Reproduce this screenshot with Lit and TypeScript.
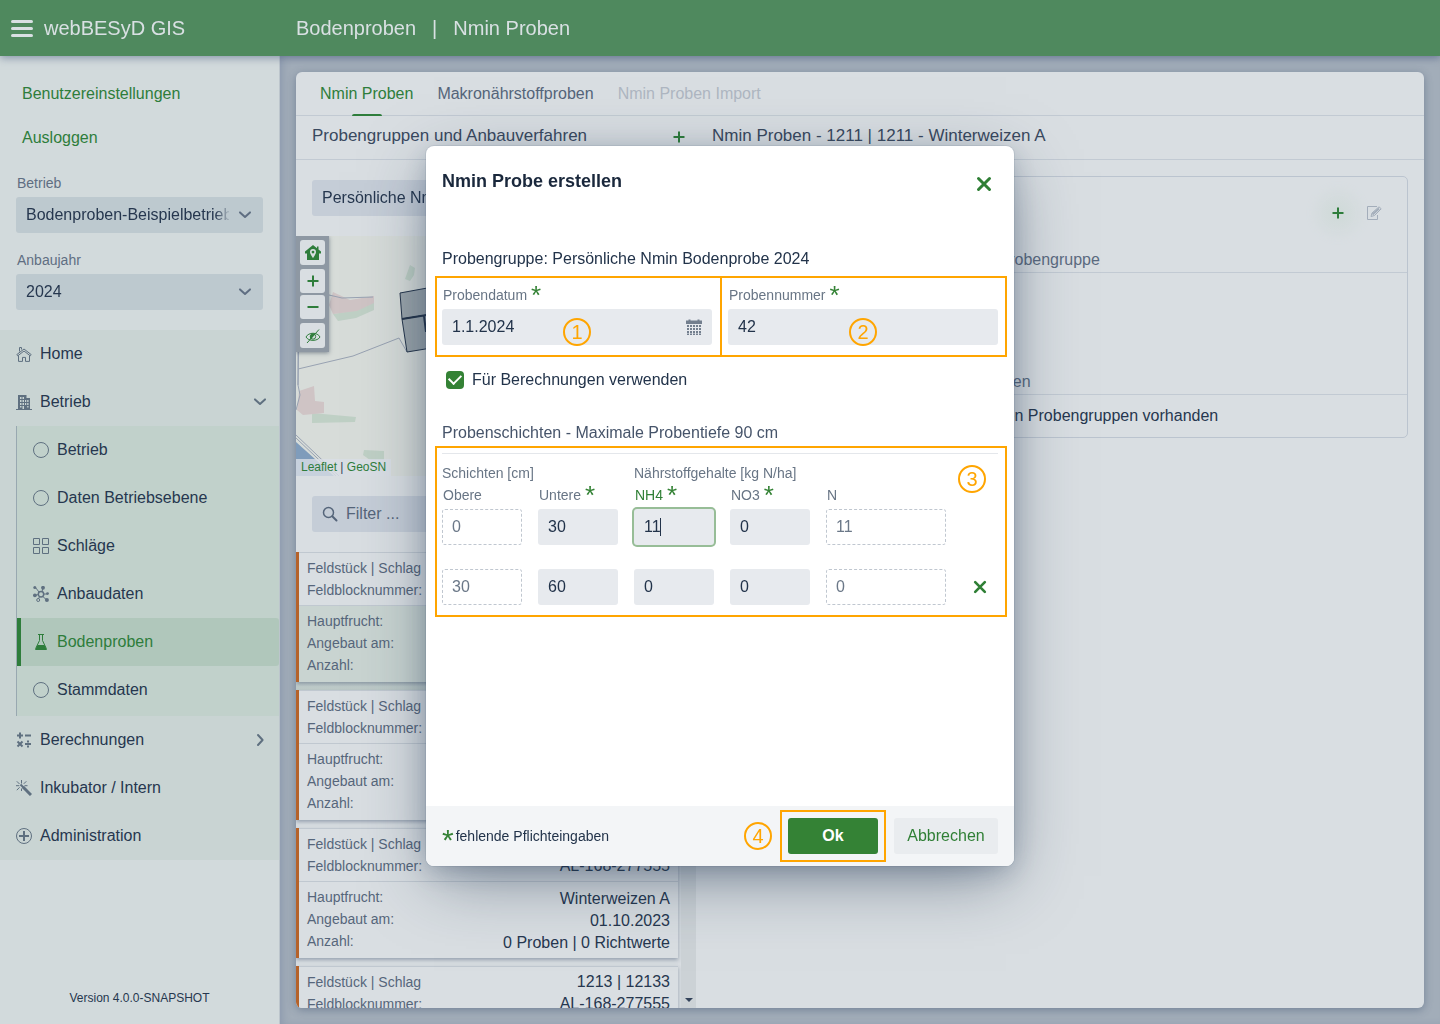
import { LitElement, html, css, svg, nothing } from "lit";
import { customElement, property } from "lit/decorators.js";
import { classMap } from "lit/directives/class-map.js";

const icons: Record<string, unknown> = {
  home: svg`<path d="M.8 8.600 8 3l7.200 5.600-1 1.200L8 5 1.800 9.800zM3.500 5.500V1.500h2v2" /><path d="M2.500 9.500v5.900h4v-4h3v4h4V9.500" />`,
  building: svg`<path class="fill" fill-rule="evenodd" d="M2 1h8.500v3H14v11h2v1H0v-1h2zM4 3v2h1.500V3zm2.500 0v2H8V3zM4 6v2h1.500V6zm2.500 0v2H8V6zM9 6v2h1.200V6zm2.200 0v2h1.300V6zM4 9v2h1.500V9zm2.500 0v2H8V9zM9 9v2h1.200V9zm2.200 0v2h1.300V9zM4 12v1.500h1.500V12zm2.500 0v3H8v-3zm4.700 0v1.500h1.300V12z" />`,
  circle: svg`<circle cx="8" cy="8" r="7.500" />`,
  grid: svg`<path d="M.5.5h6v6h-6zM9.500.5h6v6h-6zM.5 9.500h6v6h-6zM9.500 9.500h6v6h-6z" />`,
  cluster: svg`<circle cx="8" cy="8.200" r="2.700" stroke-width="1.500" /><path d="M2.500 1.500 6 6M10 2 9 5.500M5.300 8.600 2 9.200M10.700 8h3.500M9.800 10.500l3.700 3.300M6.500 10.800l-1 2" /><g class="fill"><circle cx="1.800" cy="1.500" r="1.500" /><circle cx="10" cy="1.800" r="1.900" /><circle cx="1.900" cy="9.300" r="1.900" /><circle cx="14.500" cy="7.600" r="1.400" /><circle cx="13.900" cy="14" r="2" /></g><circle cx="5.200" cy="14" r="1.500" />`,
  flask: svg`<path d="M5 .5h6M6.500.5v6L2.700 14.500h10.600L9.500 6.500v-6" /><path class="fill" d="M4.500 11h7L14 16H2z" />`,
  calc: svg`<path stroke-width="2" d="M1 3.500h6M4 .5v6M9 3.500h6M1.500 9.500l5 5M6.500 9.500l-5 5M9 12h6" /><path class="fill" d="M11 8.500h2v2h-2zM11 13.500h2v2h-2z" />`,
  magic: svg`<path stroke-width="3" d="m7 7 8 8" /><path d="M5.500 0v3.500M.8 1.300l2.700 2.700M10.300 1.300 7.800 3.800M0 5.700h3.300M8.500 5.700h3M3.600 7.300.8 10.200M5.500 8.500V11" /><path d="m4.500 4.500 3 3" stroke-width="2" />`,
  plusCircle: svg`<circle cx="8" cy="8" r="7.500" /><path stroke-width="2" d="M8 3v10M3 8h10" />`,
  down: svg`<path stroke-width="2" stroke-linecap="round" stroke-linejoin="round" d="M3 5.400 8 10l5-4.600" />`,
  right: svg`<path stroke-width="2" stroke-linecap="round" stroke-linejoin="round" d="M6 3l4.600 5L6 13" />`,
  plus: svg`<path stroke-width="2" d="M8 2.500v11M2.500 8h11" />`,
  minus: svg`<path stroke-width="2" d="M2.500 8h11" />`,
  cross: svg`<path stroke-width="3" stroke-linecap="round" d="m2.500 2.500 11 11M13.500 2.500l-11 11" />`,
  search: svg`<circle cx="6.500" cy="6.500" r="5" stroke-width="1.500" /><path stroke-width="2" stroke-linecap="round" d="m10.500 10.500 4 4" />`,
  edit: svg`<path d="M11 1.500H1.500v13h10V10" /><path d="m5 11.500 1-3.500L13 1.800l2.200 2L8.500 10.500z" /><path stroke-width="2" d="m6.500 9.500 6.500-6" />`,
  pinHome: svg`<path class="fill" fill-rule="evenodd" d="M8 0 0 6.500v2h2V15h12V8.500h2v-2l-2.500-2v-3H12v1.700zM8 4a3 3 0 0 1 3 3c0 2-3 6-3 6S5 9 5 7a3 3 0 0 1 3-3zm0 1.700a1.400 1.400 0 1 0 0 2.800 1.400 1.400 0 0 0 0-2.800z" />`,
  eyeOff: svg`<path d="M1 9c2.500-5 11.500-5 14 0-2.500 4.500-11.500 4.500-14 0zM2 15 14 1.500" /><circle cx="8" cy="8.500" r="2.700" /><path class="fill" d="M5.500 11.500C4 7.500 6 5.500 10 6z" />`,
  calendar: svg`<path class="fill" d="M0 1.500h2.500V.5h2v1h7v-1h2v1H16V5H0z" /><path stroke-width="2" stroke-dasharray="2 1" d="M1 7h14M1 10h14M1 13h14M1 15.500h14" />`,
};

const icon = (name: string, cls = "") =>
  html`<svg class="icon ${cls}" viewBox="0 0 16 16" aria-hidden="true">${icons[name]}</svg>`;

const base = css`
  * { box-sizing: border-box; }
  button, input, select { font: inherit; color: inherit; margin: 0; border: 0; background: none; padding: 0; min-width: 0; outline: none; }
  button { cursor: pointer; display: inline-flex; align-items: center; justify-content: center; }
  a { text-decoration: none; color: inherit; }
  .icon { width: 16px; height: 16px; flex: none; fill: none; stroke: currentColor; stroke-width: 1; display: block; }
  .icon .fill { fill: currentColor; stroke: none; }
  .green { color: #2e7d3b; }
`;

@customElement("app-select")
class AppSelect extends LitElement {
  @property() label = "";
  @property() value = "";
  static styles = [base, css`
    :host { display: block; }
    label { display: block; font-size: 14px; line-height: 22px; padding: 0 1px 3px; color: #5f6e82; }
    .box { display: grid; align-items: center; height: 36px; border-radius: 3px; background: var(--field, #bdc9cf); }
    select { grid-area: 1 / 1; appearance: none; width: 100%; height: 36px; padding: 0 34px 0 10px; color: #26374f;
      mask-image: linear-gradient(to left, transparent 32px, #000 48px); }
    .icon { grid-area: 1 / 1; justify-self: end; margin-right: 10px; color: #5f6e82; pointer-events: none; }
  `];
  render() {
    return html`
      ${this.label ? html`<label for="select">${this.label}</label>` : nothing}
      <div class="box">
        <select id="select" aria-label=${this.label || "Probengruppe"}><option>${this.value}</option></select>
        ${icon("down")}
      </div>`;
  }
}

@customElement("side-nav")
class SideNav extends LitElement {
  static styles = [base, css`
    :host { display: flex; flex-direction: column; background: #d2dadc; border-right: 1px solid #bcc5cc; color: #26374f; }
    .links { display: flex; flex-direction: column; gap: 8px; padding: 20px 22px 16px; }
    .links a { line-height: 36px; color: #2e7d3b; }
    .selects { display: grid; gap: 16px; padding: 0 16px 20px; }
    nav { background: #c9d4d3; }
    .item { display: flex; align-items: center; gap: 8px; height: 48px; padding: 0 11px 0 16px; }
    .item .text { flex: 1; }
    .icon { color: #5f7080; }
    .sub { margin-left: 16px; border-left: 1px solid #98a8b0; background: #c1d1cb; padding-bottom: 2px; }
    .active { background: #b0c7bb; border-left: 4px solid #2e7d3b; padding-left: 12px; border-radius: 0 3px 3px 0; color: #2e7d3b; }
    .active .icon { color: inherit; }
    footer { margin-top: auto; padding: 16px; text-align: center; font-size: 12px; line-height: 20px; }
  `];
  private item(name: string, text: string, opts: { active?: boolean; arrow?: string } = {}) {
    return html`<a href="#" class=${classMap({ item: true, active: !!opts.active })}>
      ${icon(name)}<span class="text">${text}</span>${opts.arrow ? icon(opts.arrow) : nothing}
    </a>`;
  }
  render() {
    return html`
      <div class="links"><a href="#">Benutzereinstellungen</a><a href="#">Ausloggen</a></div>
      <div class="selects">
        <app-select label="Betrieb" value="Bodenproben-Beispielbetrieb"></app-select>
        <app-select label="Anbaujahr" value="2024"></app-select>
      </div>
      <nav>
        ${this.item("home", "Home")}
        ${this.item("building", "Betrieb", { arrow: "down" })}
        <div class="sub">
          ${this.item("circle", "Betrieb")}
          ${this.item("circle", "Daten Betriebsebene")}
          ${this.item("grid", "Schläge")}
          ${this.item("cluster", "Anbaudaten")}
          ${this.item("flask", "Bodenproben", { active: true })}
          ${this.item("circle", "Stammdaten")}
        </div>
        ${this.item("calc", "Berechnungen", { arrow: "right" })}
        ${this.item("magic", "Inkubator / Intern")}
        ${this.item("plusCircle", "Administration")}
      </nav>
      <footer>Version 4.0.0-SNAPSHOT</footer>`;
  }
}

@customElement("field-map")
class FieldMap extends LitElement {
  static styles = [base, css`
    :host { display: block; position: relative; height: 240px; overflow: hidden; background: #d7dcd9; }
    .canvas { display: block; width: 100%; height: 100%; }
    .controls { position: absolute; top: 0; left: 0; width: 33px; padding: 4px; display: flex; flex-direction: column; gap: 4px;
      background: #8e98a3; box-shadow: 0 1px 4px rgba(40, 55, 75, 0.5); }
    .zoom { display: flex; flex-direction: column; gap: 2px; }
    .controls button { width: 25px; height: 25px; border-radius: 3px; background: #d9dee2; color: #2e7d3b; }
    .zoom button { height: 24px; }
    .credits { position: absolute; left: 0; bottom: 0; padding: 0 5px; font-size: 12px; line-height: 17px; background: rgba(217, 222, 230, 0.8); color: #3a495c; }
  `];
  render() {
    return html`
      <svg class="canvas" viewBox="296 236 400 240" preserveAspectRatio="xMinYMin slice" aria-hidden="true">
        <g fill="#bfd0c5">
          <path d="M405 279l5-14 5 3-1 7-4 6zM333 314l24-4 17-8v8l-18 8-18 3zM312 413l44 4-1 5-43 1zM364 450l20 1v9h-14l-7-5z" />
        </g>
        <g fill="#cfc4c5">
          <path d="M333 292l17 8 24-4v7l-17 8-24 3-4-9zM299 391l15-5 1 15 9 1v11l-21 2-6-5z" />
        </g>
        <path fill="#7f9cbb" d="M296 442l38 34h-38z" />
        <g fill="none" stroke="#98a2b2">
          <path d="M296 288l33 7 13 3 31-1M298 369l55-13 46-18 8 14M296 305l3 25-1 55 2 10-4 15M298 305v80" />
          <path d="M296 435l43 41M296 438l40 38" />
        </g>
        <g fill="#9ba5ab" stroke="#24344a">
          <path d="M400 293l60-11 4 27-62 10z" />
          <path d="M402 319l62-10 4 33-61 10z" />
          <path fill="none" stroke-width="2" d="M402 319l62-10M424 316l2 16" />
        </g>
      </svg>
      <div class="controls">
        <button aria-label="Startansicht">${icon("pinHome")}</button>
        <div class="zoom">
          <button aria-label="Vergrößern">${icon("plus")}</button>
          <button aria-label="Verkleinern">${icon("minus")}</button>
        </div>
        <button aria-label="Ausblenden">${icon("eyeOff")}</button>
      </div>
      <div class="credits"><a class="green" href="#">Leaflet</a> | <a class="green" href="#">GeoSN</a></div>`;
  }
}

interface Plot { parcel: string; block: string; crop: string; sown: string; count: string; selected?: boolean }
const plots: Plot[] = ["1211 | 1211", "1212 | 12121", "1212 | 12122", "1213 | 12133"].map((parcel, i) => ({
  parcel, block: "AL-168-277555", crop: "Winterweizen A", sown: "01.10.2023", count: "0 Proben | 0 Richtwerte", selected: i === 0,
}));

@customElement("plot-list")
class PlotList extends LitElement {
  static styles = [base, css`
    :host { display: flex; overflow: hidden; color: #26374f; }
    .list { flex: 1; overflow: hidden; padding-right: 3px; }
    .slot { padding-bottom: 8px; }
    .slot.selected { background: linear-gradient(#d9dee2 60%, #c0ccca); }
    .card { border-left: 3px solid #b5622a; box-shadow: 0 2px 4px rgba(50, 70, 100, 0.4); background: #d9dee2; }
    .selected .bottom { background: #c9d4d1; }
    dl { margin: 0; padding: 4px 8px; border-top: 1px solid #c0c8d0; }
    .bottom { padding-bottom: 6px; }
    .pair { display: flex; justify-content: space-between; align-items: baseline; line-height: 22px; height: 22px; }
    .bottom .pair { align-items: flex-start; }
    .bottom dd { line-height: 26px; }
    dt { font-size: 14px; color: #56667b; }
    dd { margin: 0; }
    .bar { width: 15px; display: flex; align-items: flex-end; justify-content: center; background: #ccd2d6; padding-bottom: 6px; }
    .arrow { border: 4px solid transparent; border-top-color: #33435a; border-bottom: 0; }
  `];
  private pair(k: string, v: string) {
    return html`<div class="pair"><dt>${k}</dt><dd>${v}</dd></div>`;
  }
  render() {
    return html`
      <div class="list">
        ${plots.map((p) => html`
          <div class=${classMap({ slot: true, selected: !!p.selected })}>
            <div class="card">
              <dl class="top">${this.pair("Feldstück | Schlag", p.parcel)}${this.pair("Feldblocknummer:", p.block)}</dl>
              <dl class="bottom">${this.pair("Hauptfrucht:", p.crop)}${this.pair("Angebaut am:", p.sown)}${this.pair("Anzahl:", p.count)}</dl>
            </div>
          </div>`)}
      </div>
      <div class="bar"><span class="arrow"></span></div>`;
  }
}

@customElement("sample-dialog")
class SampleDialog extends LitElement {
  static styles = [base, css`
    :host { position: fixed; inset: 0; display: flex; align-items: center; justify-content: center; padding: 0 16px 12px; color: #22334a; }
    .dialog { display: flex; flex-direction: column; width: 588px; min-height: 720px; border-radius: 8px; background: #fff;
      box-shadow: 0 0 0 1px rgba(30, 50, 80, 0.08), 0 6px 24px -4px hsla(214, 45%, 25%, 0.3), 0 18px 64px -8px hsla(214, 45%, 20%, 0.5); overflow: hidden; }
    header { display: flex; align-items: flex-start; justify-content: space-between; padding: 17px 12px 11px 16px; }
    h2 { margin: 0; font-size: 18px; line-height: 36px; color: #1a283c; }
    .square { width: 36px; height: 36px; color: #2f7f35; }
    header .square { height: 42px; }
    .main { flex: 1; padding: 29px 16px; }
    p { margin: 0; line-height: 28px; }
    .framed { position: relative; }
    .frame { position: absolute; inset: -8px -9px -12px -7px; border: 2px solid #ffa500; pointer-events: none; }
    .split::after { content: ""; position: absolute; top: 0; bottom: 0; left: calc(50% - 1px); width: 2px; background: #ffa500; }
    .around { inset: -8px; }
    .badge { width: 28px; height: 28px; border: 2px solid #ffa500; border-radius: 50%; color: #ffa500; font-size: 20px; line-height: 24px; text-align: center; flex: none; }
    .over { position: absolute; left: calc(50% - 14px); bottom: -1px; }
    .corner { position: absolute; right: 12px; top: 11px; }
    .fields { display: grid; grid-template-columns: 1fr 1fr; gap: 16px; margin-top: 11px; }
    .field { position: relative; display: flex; flex-direction: column; }
    label, .caption { font-size: 14px; line-height: 22px; height: 22px; color: #687585; white-space: nowrap; }
    .field label { padding-left: 1px; margin-bottom: 3px; }
    .field label.focused { color: #2f7f35; }
    .star { font-size: 26px; line-height: 16px; color: #348235; vertical-align: -4px; }
    .box { display: flex; align-items: center; height: 36px; border-radius: 3px; background: #e7eaee; padding-right: 10px; }
    .box input { flex: 1; }
    .box button { width: 16px; height: 16px; color: #737f8e; }
    input.text { width: 100%; height: 36px; padding: 0 10px; border-radius: 3px; background: #e7eaee; }
    .box input.text { background: none; }
    input.readonly { background: none; border: 1px dashed #c0c7d0; padding: 0 9px; color: #6b7888; }
    input.active { box-shadow: 0 0 0 2px #97bd97; }
    .caret { position: absolute; left: 26px; bottom: 9px; width: 1px; height: 18px; background: #22334a; }
    .check { display: flex; align-items: center; gap: 8px; padding-left: 4px; margin-top: 24px; height: 22px; }
    .check label { font-size: 16px; color: #22334a; }
    .check input { appearance: none; width: 18px; height: 18px; border-radius: 4px; background: #348235; display: grid; place-items: center; }
    .check input::after { content: ""; width: 10px; height: 6px; border: solid #fff; border-width: 0 0 2px 2px; transform: translateY(-2px) rotate(-45deg); }
    h3 { margin: 29px 0 0; font-size: 16px; font-weight: 400; line-height: 26px; color: #46546a; }
    .layers { margin-top: 7px; border-top: 1px solid #e4e7eb; padding-top: 8px; }
    .cols { display: grid; grid-template-columns: repeat(4, 80px) 120px 1fr; column-gap: 16px; align-items: end; }
    .row + .row { margin-top: 24px; }
    .nutrients { grid-column: 3 / span 3; }
    .remove .icon { width: 14px; height: 14px; }
    footer { display: flex; align-items: center; gap: 16px; padding: 12px 16px; background: #f3f5f7; }
    .hint { flex: 1; display: flex; align-items: center; gap: 2px; font-size: 14px; line-height: 36px; }
    .hint .star { font-size: 30px; line-height: 24px; margin-top: 8px; }
    .ok-wrap { display: flex; }
    .ok, .cancel { height: 36px; border-radius: 3px; }
    .ok { width: 90px; background: #348235; color: #fff; font-weight: 700; }
    .cancel { width: 104px; background: #e9ecef; color: #2f7f35; }
  `];
  private cell(id: string, value: string, opts: { label?: string; required?: boolean; readonly?: boolean; active?: boolean; name: string }) {
    return html`<div class="field">
      ${opts.label ? html`<label for=${id} class=${classMap({ focused: !!opts.active })}>${opts.label}${opts.required ? html` <span class="star">*</span>` : nothing}</label>` : nothing}
      <input id=${id} class=${classMap({ text: true, readonly: !!opts.readonly, active: !!opts.active })}
        .value=${value} ?readonly=${opts.readonly} aria-label=${opts.name} />
      ${opts.active ? html`<span class="caret"></span>` : nothing}
    </div>`;
  }
  private row(n: number, v: string[], first: boolean) {
    const names = ["Obere", "Untere", "NH4", "NO3", "N"];
    return html`<div class="cols row">
      ${names.map((name, i) => this.cell(`c${n}-${i}`, v[i], {
        name, label: first ? name : undefined, required: i > 0 && i < 4, readonly: i === 0 || i === 4, active: first && i === 2,
      }))}
      ${first ? nothing : html`<button class="square remove" aria-label="Schicht entfernen">${icon("cross")}</button>`}
    </div>`;
  }
  render() {
    return html`
      <section class="dialog" role="dialog" aria-labelledby="title">
        <header>
          <h2 id="title">Nmin Probe erstellen</h2>
          <button class="square" aria-label="Schließen">${icon("cross")}</button>
        </header>
        <div class="main">
          <p>Probengruppe: Persönliche Nmin Bodenprobe 2024</p>
          <div class="fields framed">
            <div class="field">
              <label for="date">Probendatum <span class="star">*</span></label>
              <div class="box"><input id="date" class="text" value="1.1.2024" /><button aria-label="Kalender">${icon("calendar")}</button></div>
              <span class="badge over">1</span>
            </div>
            <div class="field">
              <label for="number">Probennummer <span class="star">*</span></label>
              <input id="number" class="text" value="42" />
              <span class="badge over">2</span>
            </div>
            <span class="frame split"></span>
          </div>
          <div class="check"><input id="use" type="checkbox" checked /><label for="use">Für Berechnungen verwenden</label></div>
          <h3>Probenschichten - Maximale Probentiefe 90 cm</h3>
          <div class="layers framed">
            <div class="cols"><span class="caption">Schichten [cm]</span><span class="caption nutrients">Nährstoffgehalte [kg N/ha]</span></div>
            ${this.row(1, ["0", "30", "11", "0", "11"], true)}
            ${this.row(2, ["30", "60", "0", "0", "0"], false)}
            <span class="badge corner">3</span>
            <span class="frame"></span>
          </div>
        </div>
        <footer>
          <span class="hint"><span class="star">*</span>fehlende Pflichteingaben</span>
          <span class="badge">4</span>
          <span class="framed ok-wrap"><button class="ok">Ok</button><span class="frame around"></span></span>
          <button class="cancel">Abbrechen</button>
        </footer>
      </section>`;
  }
}

@customElement("app-root")
class AppRoot extends LitElement {
  static styles = [base, css`
    :host { display: flex; flex-direction: column; height: 100vh; overflow: hidden; background: #a2adb9;
      font-family: "Liberation Sans", Arial, sans-serif; font-size: 16px; line-height: 22px; color: #26374f; }
    .bar { display: flex; align-items: center; height: 56px; flex: none; background: #4f895e; color: #d9e0e3; font-size: 20px; z-index: 1;
      box-shadow: 0 2px 8px rgba(60, 80, 120, 0.5); }
    .brand { display: flex; align-items: center; gap: 11px; width: 296px; padding-left: 11px; }
    .burger { width: 22px; height: 17px; display: flex; flex-direction: column; justify-content: space-between; }
    .burger i { width: 22px; height: 3px; border-radius: 2px; background: #d9e0e3; }
    .crumbs { display: flex; gap: 16px; }
    .body { flex: 1; min-height: 0; display: grid; grid-template-columns: 280px 1fr; }
    .page { min-height: 0; min-width: 0; padding: 16px; display: flex; box-shadow: inset 5px 0 8px -3px rgba(70, 90, 140, 0.25); }
    .card { flex: 1; min-width: 0; display: flex; flex-direction: column; border-radius: 6px; overflow: hidden; background: #d9dee2; box-shadow: 0 2px 8px rgba(60, 80, 110, 0.45); }
    .tabs { display: flex; gap: 24px; height: 44px; flex: none; padding: 0 24px; border-bottom: 1px solid #c2cad3; color: #55657a; }
    .tabs button { position: relative; height: 44px; }
    .tabs .current { color: #2e7d3b; }
    .tabs .current::after { content: ""; position: absolute; left: calc(50% - 15px); bottom: 0; width: 30px; height: 2px; border-radius: 2px 2px 0 0; background: #2e7d3b; }
    .tabs .off { color: #aeb6c1; }
    .columns { flex: 1; min-height: 0; display: grid; grid-template-columns: 400px 1fr; }
    .column { min-height: 0; min-width: 0; display: flex; flex-direction: column; }
    .heading { display: flex; justify-content: space-between; align-items: center; height: 44px; flex: none; padding: 0 0 4px 16px; border-bottom: 1px solid #c2cad3; font-size: 17px; color: #3a495f; }
    .heading button { width: 34px; height: 36px; margin-top: 3px; }
    .group { --field: #c5cdd7; padding: 20px 16px; }
    .filter { display: flex; align-items: center; gap: 8px; height: 36px; flex: none; margin: 20px 16px; padding: 0 10px; border-radius: 3px; background: #c5cdd7; color: #55657a; }
    .filter input { flex: 1; }
    .filter input::placeholder { color: #55657a; opacity: 1; }
    plot-list { flex: 1; min-height: 0; }
    .details { margin: 16px; border: 1px solid #bbc4cf; border-radius: 5px; }
    .tools { display: flex; justify-content: flex-end; padding: 18px 15px 13px; }
    .tools button { width: 36px; height: 36px; color: #a3adba; }
    .tools .add { color: #2e7d3b; border-radius: 50%; background: radial-gradient(circle, #cfdad8, #d5dcde 70%); box-shadow: 0 0 8px 6px #d5dcde; }
    .section { padding: 3px 16px 0; line-height: 25px; border-bottom: 1px solid #c2cad3; color: #5c6b80; white-space: nowrap; }
    .space { min-height: 93px; }
    .empty { padding: 0 16px; line-height: 42px; white-space: nowrap; }
  `];
  render() {
    return html`
      <header class="bar">
        <div class="brand"><button class="burger" aria-label="Menü"><i></i><i></i><i></i></button><span>webBESyD GIS</span></div>
        <div class="crumbs"><span>Bodenproben</span><span>|</span><span>Nmin Proben</span></div>
      </header>
      <div class="body">
        <side-nav></side-nav>
        <main class="page">
          <div class="card">
            <div class="tabs">
              <button class="current">Nmin Proben</button>
              <button>Makronährstoffproben</button>
              <button class="off" disabled>Nmin Proben Import</button>
            </div>
            <div class="columns">
              <div class="column">
                <div class="heading"><span>Probengruppen und Anbauverfahren</span><button class="green" aria-label="Probengruppe anlegen">${icon("plus")}</button></div>
                <div class="group"><app-select value="Persönliche Nmin Bodenprobe 2024"></app-select></div>
                <field-map></field-map>
                <div class="filter">${icon("search")}<input placeholder="Filter ..." aria-label="Filter" /></div>
                <plot-list></plot-list>
              </div>
              <div class="column">
                <div class="heading"><span>Nmin Proben - 1211 | 1211 - Winterweizen A</span></div>
                <div class="details">
                  <div class="tools">
                    <button class="add" aria-label="Probe hinzufügen">${icon("plus")}</button>
                    <button aria-label="Probe bearbeiten">${icon("edit")}</button>
                  </div>
                  <div class="section">Nmin Laborwerte für die ausgewählte Probengruppe</div>
                  <div class="space"></div>
                  <div class="section">Andere zugeordnete Nmin Probengruppen</div>
                  <div class="empty">Es sind dort keine weiteren zugeordneten Probengruppen vorhanden</div>
                </div>
              </div>
            </div>
          </div>
        </main>
      </div>
      <sample-dialog></sample-dialog>`;
  }
}
